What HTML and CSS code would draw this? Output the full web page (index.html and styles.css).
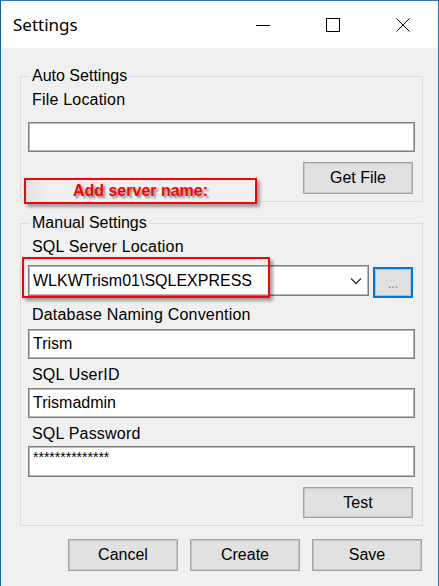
FILE: index.html
```html
<!DOCTYPE html>
<html>
<head>
<meta charset="utf-8">
<link rel="stylesheet" href="styles.css">
</head>
<body>
<div class="window">
  <div class="titlebar">
    <div class="title">Settings</div>
    <div class="caption-buttons">
      <div class="cap-btn"><svg width="16" height="16" viewBox="0 0 16 16"><line x1="1" y1="8.5" x2="15" y2="8.5" stroke="#000" stroke-width="1"/></svg></div>
      <div class="cap-btn"><svg width="16" height="16" viewBox="0 0 16 16"><rect x="1.5" y="1.5" width="13" height="13" fill="none" stroke="#000" stroke-width="1"/></svg></div>
      <div class="cap-btn"><svg width="16" height="16" viewBox="0 0 16 16"><path d="M1.5 1.5 L14.5 14.5 M14.5 1.5 L1.5 14.5" stroke="#000" stroke-width="1" fill="none"/></svg></div>
    </div>
  </div>
  <div class="client">
    <fieldset class="group group-auto">
      <legend>Auto Settings</legend>
      <div class="label first">File Location</div>
      <div class="textbox tb-file"></div>
      <div class="btn-row">
        <div class="button">Get File</div>
      </div>
    </fieldset>

    <fieldset class="group group-manual">
      <legend>Manual Settings</legend>
      <div class="label first">SQL Server Location</div>
      <div class="combo-row">
        <div class="combo">
          <span class="combo-text">WLKWTrism01\SQLEXPRESS</span>
          <svg class="chevron" width="12" height="8" viewBox="0 0 12 8"><path d="M1 1.5 L6 6.5 L11 1.5" fill="none" stroke="#333" stroke-width="1.4"/></svg>
        </div>
        <div class="dots-btn">...</div>
      </div>
      <div class="label l-db">Database Naming Convention</div>
      <div class="textbox tb-db">Trism</div>
      <div class="label l-user">SQL UserID</div>
      <div class="textbox tb-user">Trismadmin</div>
      <div class="label l-pass">SQL Password</div>
      <div class="textbox tb-pass"><span class="stars">**************</span></div>
      <div class="btn-row test-row">
        <div class="button">Test</div>
      </div>
    </fieldset>

    <div class="bottom-row">
      <div class="button">Cancel</div>
      <div class="button">Create</div>
      <div class="button">Save</div>
    </div>

    <div class="note note-server">Add server name:</div>
    <div class="note note-combo"></div>
  </div>
</div>
</body>
</html>
```

FILE: styles.css
```css
html, body {
  margin: 0;
  padding: 0;
}
body {
  width: 439px;
  height: 586px;
  overflow: hidden;
  background: #1b4f78;
  font-family: "Liberation Sans", Arial, sans-serif;
  font-size: 16px;
  color: #000;
}
.window {
  box-sizing: border-box;
  width: 439px;
  height: 586px;
  border-top: 1px solid #2a7bc4;
  border-left: 1px solid #1f5f92;
  border-right: 1px solid #2a6fae;
  background: #f0f0f0;
  display: flex;
  flex-direction: column;
}
.titlebar {
  height: 47px;
  background: #fff;
  display: flex;
  align-items: stretch;
  justify-content: space-between;
  flex-shrink: 0;
}
.title {
  font-family: "Noto Sans", "Open Sans", sans-serif;
  font-size: 17px;
  line-height: 47px;
  padding-left: 12px;
  color: #000;
}
.caption-buttons {
  display: flex;
}
.cap-btn {
  width: 70px;
  height: 47px;
  display: flex;
  align-items: center;
  justify-content: center;
}
.cap-btn svg {
  display: block;
}
.client {
  position: relative;
  flex: 1;
  background: #f0f0f0;
  display: flex;
  flex-direction: column;
}
.group {
  box-sizing: border-box;
  width: 403px;
  margin: 0 0 0 19px;
  padding: 0 7px 7px 7px;
  border: 1px solid #dcdcdc;
  min-width: 0;
}
.group-auto {
  margin-top: 19px;
}
.group-manual {
  margin-top: 12px;
}
.group legend {
  padding: 0 2px 0 2px;
  margin-left: 2px;
  height: 18px;
  line-height: 18px;
  font-size: 16px;
}
.label {
  height: 18px;
  line-height: 18px;
  padding-left: 4px;
  white-space: nowrap;
  letter-spacing: 0.2px;
}
.label.first {
  margin-top: 6px;
}
.textbox {
  box-sizing: border-box;
  height: 30px;
  background: #fff;
  border: 1px solid #7f7f7f;
  box-shadow: inset 0 0 0 1px #b9b9b9;
  padding-left: 4px;
  line-height: 28px;
  white-space: nowrap;
}
.tb-file {
  margin-top: 13px;
}
.btn-row {
  display: flex;
  justify-content: flex-end;
  margin-top: 10px;
  padding-right: 2px;
}
.button {
  box-sizing: border-box;
  width: 110px;
  height: 32px;
  background: #e1e1e1;
  border: 1px solid #a3a3a3;
  box-shadow: inset 0 0 0 1px #c6c6c6;
  text-align: center;
  line-height: 30px;
}
.combo-row {
  display: flex;
  align-items: flex-start;
  gap: 4px;
  margin-top: 9px;
}
.combo {
  box-sizing: border-box;
  width: 341px;
  height: 31px;
  background: #fff;
  border: 1px solid #7f7f7f;
  box-shadow: inset 0 0 0 1px #b9b9b9;
  display: flex;
  align-items: center;
  justify-content: space-between;
  padding: 0 6px 0 4px;
}
.combo-text {
  white-space: nowrap;
}
.chevron {
  display: block;
}
.dots-btn {
  box-sizing: border-box;
  width: 40px;
  height: 31px;
  margin-top: 2px;
  background: #e1e1e1;
  border: 2px solid #0078d7;
  box-shadow: inset 0 0 0 1px #9cc8ec;
  color: #707070;
  font-size: 12px;
  text-align: center;
  line-height: 30px;
}
.l-db {
  margin-top: 8px;
}
.tb-db {
  margin-top: 5px;
}
.l-user {
  margin-top: 7px;
}
.tb-user {
  margin-top: 4px;
}
.l-pass {
  margin-top: 7px;
}
.tb-pass {
  margin-top: 3px;
  height: 31px;
  line-height: 20px;
}
.stars {
  font-size: 14px;
  vertical-align: top;
}
.test-row .button {
  height: 31px;
  line-height: 29px;
}
.bottom-row {
  display: flex;
  justify-content: flex-end;
  gap: 12px;
  margin-top: 13px;
  padding-right: 16px;
}
.note {
  position: absolute;
  box-sizing: border-box;
  border: 2px solid #ff0000;
  box-shadow: 3px 3px 3px rgba(0, 0, 0, 0.35);
}
.note-server {
  left: 23px;
  top: 130px;
  width: 233px;
  height: 26px;
  background: linear-gradient(to right, #e2e2e2 0px, #f0f0f0 24px);
  color: #ff0000;
  font-weight: bold;
  font-size: 16px;
  line-height: 22px;
  text-align: center;
  text-shadow: 2px 2px 2px #8a8a8a;
}
.note-combo {
  left: 21px;
  top: 209px;
  width: 248px;
  height: 41px;
}
```
